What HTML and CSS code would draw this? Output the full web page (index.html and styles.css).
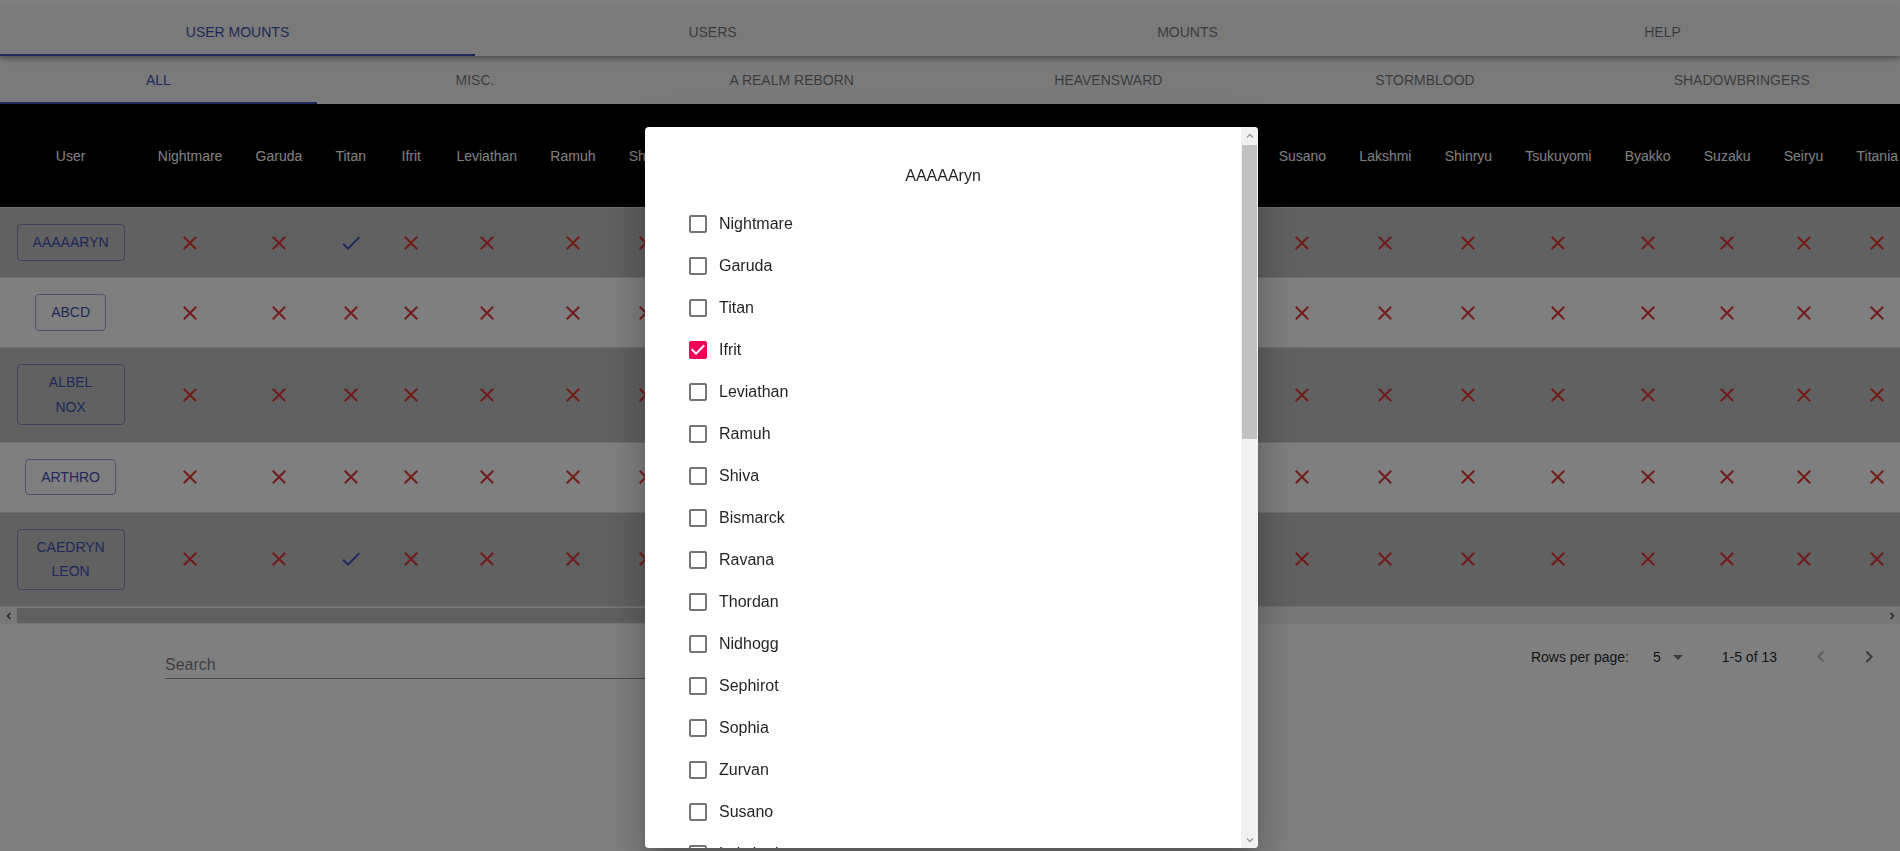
FILE: index.html
```html
<!DOCTYPE html>
<html lang="en">
<head>
<meta charset="utf-8">
<title>User Mounts</title>
<link rel="stylesheet" href="styles.css">
</head>
<body>
<svg class="defs" aria-hidden="true">
  <symbol id="x" viewBox="0 0 24 24"><path d="M19 6.41L17.59 5 12 10.59 6.41 5 5 6.41 10.59 12 5 17.59 6.41 19 12 13.41 17.59 19 19 17.59 13.41 12z"/></symbol>
  <symbol id="ok" viewBox="0 0 24 24"><path d="M9 16.17L4.83 12l-1.42 1.41L9 19 21 7l-1.41-1.41z"/></symbol>
  <symbol id="cb-off" viewBox="0 0 24 24"><path d="M19 5v14H5V5h14m0-2H5c-1.11 0-2 .9-2 2v14c0 1.1.89 2 2 2h14c1.1 0 2-.9 2-2V5c0-1.1-.9-2-2-2z"/></symbol>
  <symbol id="cb-on" viewBox="0 0 24 24"><path d="M19 3H5c-1.11 0-2 .9-2 2v14c0 1.1.89 2 2 2h14c1.1 0 2-.9 2-2V5c0-1.1-.9-2-2-2zm-9 14l-5-5 1.41-1.41L10 14.17l7.59-7.59L19 8l-9 9z"/></symbol>
</svg>

<div class="page">
  <nav class="appbar">
    <div class="tab active">User Mounts</div>
    <div class="tab">Users</div>
    <div class="tab">Mounts</div>
    <div class="tab">Help</div>
  </nav>
  <nav class="subbar">
    <div class="tab active">All</div>
    <div class="tab">Misc.</div>
    <div class="tab">A Realm Reborn</div>
    <div class="tab">Heavensward</div>
    <div class="tab">Stormblood</div>
    <div class="tab">Shadowbringers</div>
  </nav>

  <div class="table-wrap">
    <table class="grid">
      <thead>
        <tr>
          <th class="user-col">User</th>
          <th>Nightmare</th><th>Garuda</th><th>Titan</th><th>Ifrit</th><th>Leviathan</th><th>Ramuh</th><th>Shiva</th><th>Bismarck</th><th>Ravana</th><th>Thordan</th><th>Nidhogg</th><th>Sephirot</th><th>Sophia</th>
          <th>Zurvan</th><th>Susano</th><th>Lakshmi</th><th>Shinryu</th><th>Tsukuyomi</th><th>Byakko</th><th>Suzaku</th><th>Seiryu</th><th>Titania</th><th>Innocence</th><th>Hades</th><th>Ruby Weapon</th><th>Emerald Weapon</th>
        </tr>
      </thead>
      <tbody>
        <tr>
          <td class="user-col"><button class="user-btn">AAAAAryn</button></td>
          <td><svg class="ic no"><use href="#x"/></svg></td><td><svg class="ic no"><use href="#x"/></svg></td><td><svg class="ic yes"><use href="#ok"/></svg></td><td><svg class="ic no"><use href="#x"/></svg></td><td><svg class="ic no"><use href="#x"/></svg></td><td><svg class="ic no"><use href="#x"/></svg></td><td><svg class="ic no"><use href="#x"/></svg></td><td><svg class="ic no"><use href="#x"/></svg></td><td><svg class="ic no"><use href="#x"/></svg></td><td><svg class="ic no"><use href="#x"/></svg></td><td><svg class="ic no"><use href="#x"/></svg></td><td><svg class="ic no"><use href="#x"/></svg></td><td><svg class="ic no"><use href="#x"/></svg></td>
          <td><svg class="ic no"><use href="#x"/></svg></td><td><svg class="ic no"><use href="#x"/></svg></td><td><svg class="ic no"><use href="#x"/></svg></td><td><svg class="ic no"><use href="#x"/></svg></td><td><svg class="ic no"><use href="#x"/></svg></td><td><svg class="ic no"><use href="#x"/></svg></td><td><svg class="ic no"><use href="#x"/></svg></td><td><svg class="ic no"><use href="#x"/></svg></td><td><svg class="ic no"><use href="#x"/></svg></td><td><svg class="ic no"><use href="#x"/></svg></td><td><svg class="ic no"><use href="#x"/></svg></td><td><svg class="ic no"><use href="#x"/></svg></td><td><svg class="ic no"><use href="#x"/></svg></td>
        </tr>
        <tr>
          <td class="user-col"><button class="user-btn">abcd</button></td>
          <td><svg class="ic no"><use href="#x"/></svg></td><td><svg class="ic no"><use href="#x"/></svg></td><td><svg class="ic no"><use href="#x"/></svg></td><td><svg class="ic no"><use href="#x"/></svg></td><td><svg class="ic no"><use href="#x"/></svg></td><td><svg class="ic no"><use href="#x"/></svg></td><td><svg class="ic no"><use href="#x"/></svg></td><td><svg class="ic no"><use href="#x"/></svg></td><td><svg class="ic no"><use href="#x"/></svg></td><td><svg class="ic no"><use href="#x"/></svg></td><td><svg class="ic no"><use href="#x"/></svg></td><td><svg class="ic no"><use href="#x"/></svg></td><td><svg class="ic no"><use href="#x"/></svg></td>
          <td><svg class="ic no"><use href="#x"/></svg></td><td><svg class="ic no"><use href="#x"/></svg></td><td><svg class="ic no"><use href="#x"/></svg></td><td><svg class="ic no"><use href="#x"/></svg></td><td><svg class="ic no"><use href="#x"/></svg></td><td><svg class="ic no"><use href="#x"/></svg></td><td><svg class="ic no"><use href="#x"/></svg></td><td><svg class="ic no"><use href="#x"/></svg></td><td><svg class="ic no"><use href="#x"/></svg></td><td><svg class="ic no"><use href="#x"/></svg></td><td><svg class="ic no"><use href="#x"/></svg></td><td><svg class="ic no"><use href="#x"/></svg></td><td><svg class="ic no"><use href="#x"/></svg></td>
        </tr>
        <tr>
          <td class="user-col"><button class="user-btn">Albel Nox</button></td>
          <td><svg class="ic no"><use href="#x"/></svg></td><td><svg class="ic no"><use href="#x"/></svg></td><td><svg class="ic no"><use href="#x"/></svg></td><td><svg class="ic no"><use href="#x"/></svg></td><td><svg class="ic no"><use href="#x"/></svg></td><td><svg class="ic no"><use href="#x"/></svg></td><td><svg class="ic no"><use href="#x"/></svg></td><td><svg class="ic no"><use href="#x"/></svg></td><td><svg class="ic no"><use href="#x"/></svg></td><td><svg class="ic no"><use href="#x"/></svg></td><td><svg class="ic no"><use href="#x"/></svg></td><td><svg class="ic no"><use href="#x"/></svg></td><td><svg class="ic no"><use href="#x"/></svg></td>
          <td><svg class="ic no"><use href="#x"/></svg></td><td><svg class="ic no"><use href="#x"/></svg></td><td><svg class="ic no"><use href="#x"/></svg></td><td><svg class="ic no"><use href="#x"/></svg></td><td><svg class="ic no"><use href="#x"/></svg></td><td><svg class="ic no"><use href="#x"/></svg></td><td><svg class="ic no"><use href="#x"/></svg></td><td><svg class="ic no"><use href="#x"/></svg></td><td><svg class="ic no"><use href="#x"/></svg></td><td><svg class="ic no"><use href="#x"/></svg></td><td><svg class="ic no"><use href="#x"/></svg></td><td><svg class="ic no"><use href="#x"/></svg></td><td><svg class="ic no"><use href="#x"/></svg></td>
        </tr>
        <tr>
          <td class="user-col"><button class="user-btn">Arthro</button></td>
          <td><svg class="ic no"><use href="#x"/></svg></td><td><svg class="ic no"><use href="#x"/></svg></td><td><svg class="ic no"><use href="#x"/></svg></td><td><svg class="ic no"><use href="#x"/></svg></td><td><svg class="ic no"><use href="#x"/></svg></td><td><svg class="ic no"><use href="#x"/></svg></td><td><svg class="ic no"><use href="#x"/></svg></td><td><svg class="ic no"><use href="#x"/></svg></td><td><svg class="ic no"><use href="#x"/></svg></td><td><svg class="ic no"><use href="#x"/></svg></td><td><svg class="ic no"><use href="#x"/></svg></td><td><svg class="ic no"><use href="#x"/></svg></td><td><svg class="ic no"><use href="#x"/></svg></td>
          <td><svg class="ic no"><use href="#x"/></svg></td><td><svg class="ic no"><use href="#x"/></svg></td><td><svg class="ic no"><use href="#x"/></svg></td><td><svg class="ic no"><use href="#x"/></svg></td><td><svg class="ic no"><use href="#x"/></svg></td><td><svg class="ic no"><use href="#x"/></svg></td><td><svg class="ic no"><use href="#x"/></svg></td><td><svg class="ic no"><use href="#x"/></svg></td><td><svg class="ic no"><use href="#x"/></svg></td><td><svg class="ic no"><use href="#x"/></svg></td><td><svg class="ic no"><use href="#x"/></svg></td><td><svg class="ic no"><use href="#x"/></svg></td><td><svg class="ic no"><use href="#x"/></svg></td>
        </tr>
        <tr>
          <td class="user-col"><button class="user-btn">Caedryn Leon</button></td>
          <td><svg class="ic no"><use href="#x"/></svg></td><td><svg class="ic no"><use href="#x"/></svg></td><td><svg class="ic yes"><use href="#ok"/></svg></td><td><svg class="ic no"><use href="#x"/></svg></td><td><svg class="ic no"><use href="#x"/></svg></td><td><svg class="ic no"><use href="#x"/></svg></td><td><svg class="ic no"><use href="#x"/></svg></td><td><svg class="ic no"><use href="#x"/></svg></td><td><svg class="ic no"><use href="#x"/></svg></td><td><svg class="ic no"><use href="#x"/></svg></td><td><svg class="ic no"><use href="#x"/></svg></td><td><svg class="ic no"><use href="#x"/></svg></td><td><svg class="ic no"><use href="#x"/></svg></td>
          <td><svg class="ic no"><use href="#x"/></svg></td><td><svg class="ic no"><use href="#x"/></svg></td><td><svg class="ic no"><use href="#x"/></svg></td><td><svg class="ic no"><use href="#x"/></svg></td><td><svg class="ic no"><use href="#x"/></svg></td><td><svg class="ic no"><use href="#x"/></svg></td><td><svg class="ic no"><use href="#x"/></svg></td><td><svg class="ic no"><use href="#x"/></svg></td><td><svg class="ic no"><use href="#x"/></svg></td><td><svg class="ic no"><use href="#x"/></svg></td><td><svg class="ic no"><use href="#x"/></svg></td><td><svg class="ic no"><use href="#x"/></svg></td><td><svg class="ic no"><use href="#x"/></svg></td>
        </tr>
      </tbody>
    </table>
  </div>

  <div class="hscroll">
    <div class="sb-btn"><svg class="sb-arrow" viewBox="0 0 8 8"><path d="M5.5 1L2.5 4l3 3"/></svg></div>
    <div class="hs-track"><div class="hs-thumb"></div></div>
    <div class="sb-btn"><svg class="sb-arrow" viewBox="0 0 8 8"><path d="M2.5 1l3 3-3 3"/></svg></div>
  </div>

  <div class="footer">
    <div class="search"><input class="search-input" type="text" placeholder="Search"></div>
    <div class="pagination">
      <span class="rpp">Rows per page:</span>
      <div class="select"><span class="select-value">5</span><svg class="drop" viewBox="0 0 24 24"><path d="M7 10l5 5 5-5z"/></svg></div>
      <span class="range">1-5 of 13</span>
      <div class="actions">
        <div class="icon-btn disabled"><svg viewBox="0 0 24 24"><path d="M15.41 16.09l-4.58-4.59 4.58-4.59L14 5.5l-6 6 6 6z"/></svg></div>
        <div class="icon-btn"><svg viewBox="0 0 24 24"><path d="M8.59 16.34l4.58-4.59-4.58-4.59L10 5.75l6 6-6 6z"/></svg></div>
      </div>
    </div>
  </div>
</div>

<div class="backdrop"></div>

<div class="modal">
  <div class="modal-body">
    <h2 class="modal-title">AAAAAryn</h2>
    <ul class="checklist">
      <li class="check-item"><span class="cb"><svg><use href="#cb-off"/></svg></span>Nightmare</li>
      <li class="check-item"><span class="cb"><svg><use href="#cb-off"/></svg></span>Garuda</li>
      <li class="check-item"><span class="cb"><svg><use href="#cb-off"/></svg></span>Titan</li>
      <li class="check-item"><span class="cb on"><svg><use href="#cb-on"/></svg></span>Ifrit</li>
      <li class="check-item"><span class="cb"><svg><use href="#cb-off"/></svg></span>Leviathan</li>
      <li class="check-item"><span class="cb"><svg><use href="#cb-off"/></svg></span>Ramuh</li>
      <li class="check-item"><span class="cb"><svg><use href="#cb-off"/></svg></span>Shiva</li>
      <li class="check-item"><span class="cb"><svg><use href="#cb-off"/></svg></span>Bismarck</li>
      <li class="check-item"><span class="cb"><svg><use href="#cb-off"/></svg></span>Ravana</li>
      <li class="check-item"><span class="cb"><svg><use href="#cb-off"/></svg></span>Thordan</li>
      <li class="check-item"><span class="cb"><svg><use href="#cb-off"/></svg></span>Nidhogg</li>
      <li class="check-item"><span class="cb"><svg><use href="#cb-off"/></svg></span>Sephirot</li>
      <li class="check-item"><span class="cb"><svg><use href="#cb-off"/></svg></span>Sophia</li>
      <li class="check-item"><span class="cb"><svg><use href="#cb-off"/></svg></span>Zurvan</li>
      <li class="check-item"><span class="cb"><svg><use href="#cb-off"/></svg></span>Susano</li>
      <li class="check-item"><span class="cb"><svg><use href="#cb-off"/></svg></span>Lakshmi</li>
      <li class="check-item"><span class="cb"><svg><use href="#cb-off"/></svg></span>Shinryu</li>
      <li class="check-item"><span class="cb"><svg><use href="#cb-off"/></svg></span>Tsukuyomi</li>
      <li class="check-item"><span class="cb"><svg><use href="#cb-off"/></svg></span>Byakko</li>
      <li class="check-item"><span class="cb"><svg><use href="#cb-off"/></svg></span>Suzaku</li>
    </ul>
  </div>
  <div class="vscroll">
    <div class="sb-btn"><svg class="sb-arrow light" viewBox="0 0 8 8"><path d="M1 5.5l3-3 3 3"/></svg></div>
    <div class="vs-track"><div class="vs-thumb"></div></div>
    <div class="sb-btn"><svg class="sb-arrow light" viewBox="0 0 8 8"><path d="M1 2.5l3 3 3-3"/></svg></div>
  </div>
</div>
</body>
</html>
```

FILE: styles.css
```css
* { box-sizing: border-box; }

html, body {
  margin: 0;
  height: 100%;
}

body {
  font-family: "Liberation Sans", Arial, Helvetica, sans-serif;
  font-size: 14px;
  color: rgba(0, 0, 0, 0.87);
  background: #fff;
  overflow: hidden;
}

.defs {
  display: block;
  width: 0;
  height: 0;
  overflow: hidden;
}

.page {
  padding-top: 8px;
}

/* ---------- tab bars ---------- */
.appbar,
.subbar {
  display: flex;
  background: #f5f5f5;
  position: relative;
  box-shadow: 0 2px 4px -1px rgba(0, 0, 0, 0.2), 0 4px 5px 0 rgba(0, 0, 0, 0.14), 0 1px 10px 0 rgba(0, 0, 0, 0.12);
}
.appbar { z-index: 2; }
.subbar { z-index: 1; }

.tab {
  flex: 1 1 0;
  height: 48px;
  display: flex;
  align-items: center;
  justify-content: center;
  font-size: 14px;
  font-weight: 500;
  text-transform: uppercase;
  color: rgba(0, 0, 0, 0.54);
  white-space: nowrap;
}
.tab.active {
  color: #3f51b5;
  box-shadow: inset 0 -2px 0 #3f51b5;
}

/* ---------- table ---------- */
.table-wrap {
  overflow: hidden;
}

.grid {
  border-collapse: collapse;
}

.grid th {
  background: #000;
  color: #fff;
  font-weight: 400;
  font-size: 14px;
  line-height: 24px;
  padding: 39.5px 16.6px;
  white-space: nowrap;
  text-align: center;
  border-bottom: 1px solid #e0e0e0;
}

.grid td {
  padding: 16.25px 16.6px;
  text-align: center;
  vertical-align: middle;
  border-bottom: 1px solid #e0e0e0;
}

.grid tbody tr:nth-child(odd) { background: #c2c2c2; }
.grid tbody tr:nth-child(even) { background: #fff; }

.user-col { width: 1px; }

.user-btn {
  font-family: inherit;
  font-size: 14px;
  font-weight: 500;
  line-height: 1.75;
  text-transform: uppercase;
  color: #3f51b5;
  background: transparent;
  border: 1px solid rgba(63, 81, 181, 0.5);
  border-radius: 4px;
  padding: 5px 15px;
  min-width: 64px;
  text-align: center;
}

.ic {
  display: block;
  width: 24px;
  height: 24px;
  margin: 0 auto;
  fill: currentColor;
}
.ic.no { color: #e53935; }
.ic.yes { color: #3f51b5; }

/* ---------- fake scrollbars ---------- */
.hscroll {
  display: flex;
  height: 17px;
  background: #f1f1f1;
}
.sb-btn {
  flex: 0 0 17px;
  height: 17px;
  display: flex;
  align-items: center;
  justify-content: center;
}
.sb-arrow {
  width: 8px;
  height: 8px;
  fill: none;
  stroke: #505050;
  stroke-width: 1.6;
}
.sb-arrow.light { stroke: #a3a3a3; }
.hs-track {
  flex: 1;
  display: flex;
  align-items: center;
}
.hs-thumb {
  width: 1150px;
  height: 15px;
  background: #c1c1c1;
}

/* ---------- footer ---------- */
.footer {
  display: flex;
  justify-content: space-between;
  align-items: flex-start;
  padding: 0 7px 0 165px;
}

.search {
  margin-top: 22px;
  width: 620px;
  padding: 9px 0 4px;
  border-bottom: 1px solid rgba(0, 0, 0, 0.42);
}
.search-input {
  display: block;
  width: 100%;
  height: 19px;
  padding: 0;
  border: 0;
  outline: 0;
  background: transparent;
  font-family: inherit;
  font-size: 16px;
  color: rgba(0, 0, 0, 0.87);
}
.search-input::placeholder {
  color: rgba(0, 0, 0, 0.54);
  opacity: 1;
}

.pagination {
  margin-top: 7px;
  height: 52px;
  display: flex;
  align-items: center;
  font-size: 14px;
  color: rgba(0, 0, 0, 0.87);
}
.select {
  display: flex;
  align-items: center;
  margin-left: 21px;
  margin-right: 32px;
  padding-left: 3px;
}
.select-value {
  margin-right: 5px;
}
.drop {
  width: 24px;
  height: 24px;
  fill: rgba(0, 0, 0, 0.54);
}
.actions {
  display: flex;
  margin-left: 20px;
}
.icon-btn {
  width: 48px;
  height: 48px;
  display: flex;
  align-items: center;
  justify-content: center;
}
.icon-btn svg {
  width: 24px;
  height: 24px;
  fill: rgba(0, 0, 0, 0.54);
}
.icon-btn.disabled svg { fill: rgba(0, 0, 0, 0.26); }

/* ---------- dialog ---------- */
.backdrop {
  position: fixed;
  inset: 0;
  background: rgba(0, 0, 0, 0.5);
  z-index: 10;
}

.modal {
  position: fixed;
  z-index: 20;
  top: 127px;
  left: calc(50% - 305px);
  width: 613px;
  height: 721px;
  display: flex;
  background: #fff;
  border-radius: 4px;
  overflow: hidden;
  box-shadow: 0 11px 15px -7px rgba(0, 0, 0, 0.2), 0 24px 38px 3px rgba(0, 0, 0, 0.14), 0 9px 46px 8px rgba(0, 0, 0, 0.12);
}

.modal-body {
  flex: 1;
  overflow: hidden;
  padding-top: 37px;
}

.modal-title {
  margin: 0 0 15px;
  text-align: center;
  font-size: 16px;
  font-weight: 400;
  line-height: 24px;
  color: rgba(0, 0, 0, 0.87);
}

.checklist {
  list-style: none;
  margin: 0;
  padding: 0 0 0 32px;
}
.check-item {
  display: flex;
  align-items: center;
  height: 42px;
  font-size: 16px;
  color: rgba(0, 0, 0, 0.87);
}
.cb {
  flex: 0 0 42px;
  height: 42px;
  display: flex;
  align-items: center;
  justify-content: center;
  color: rgba(0, 0, 0, 0.54);
}
.cb svg {
  width: 24px;
  height: 24px;
  fill: currentColor;
}
.cb.on { color: #f50057; }

.vscroll {
  flex: 0 0 17px;
  display: flex;
  flex-direction: column;
  background: #f1f1f1;
}
.vs-track {
  flex: 1;
}
.vs-thumb {
  margin: 1px 1px 0;
  height: 294px;
  background: #c1c1c1;
}
```
